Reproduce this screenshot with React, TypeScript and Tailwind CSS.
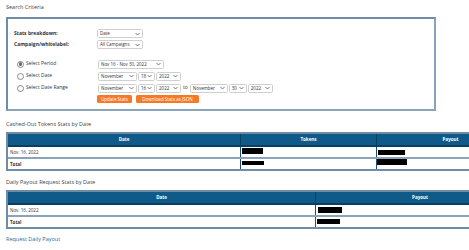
import React from "react";

function Chevron() {
  return (
    <svg width="5" height="4" viewBox="0 0 10 8" className="shrink-0" aria-hidden>
      <path d="M1 2 L5 6 L9 2" fill="none" stroke="#555" strokeWidth="1.6" />
    </svg>
  );
}

function Select({ value, w }: { value: string; w: number }) {
  return (
    <div
      className="flex h-[9px] items-center justify-between rounded-[1.5px] border border-[#cfcfcf] bg-white pl-[2px] pr-[2px] text-[4.5px] leading-none text-[#333]"
      style={{ width: w }}
    >
      <span className="whitespace-nowrap">{value}</span>
      <Chevron />
    </div>
  );
}

function Radio({ checked }: { checked?: boolean }) {
  return (
    <span className="flex h-[7px] w-[7px] items-center justify-center rounded-full border border-[#8a8a8a] bg-white">
      {checked && <span className="h-[3.5px] w-[3.5px] rounded-full bg-[#6b6b6b]" />}
    </span>
  );
}

function Redacted({ w, h }: { w: number; h: number }) {
  return <span className="block bg-black" style={{ width: w, height: h }} />;
}

export default function App() {
  return (
    <div
      className="h-[250px] w-[469px] overflow-hidden bg-white text-[#333]"
      style={{ fontFamily: '"Open Sans", "DejaVu Sans", sans-serif' }}
    >
      <div className="pl-[6px] pt-[4px]">
        <h2 className="text-[5.5px] font-medium leading-[7px] text-[#444]">Search Criteria</h2>

        <div className="mt-[6px] h-[94px] w-[430px] border-2 border-[#8aa3b8] border-t-[#6f8ca6] border-l-[#6f8ca6] pl-[6px] pt-[9px]">
          <div className="flex h-[11px] items-center">
            <span className="w-[83px] text-[5px] font-bold">Stats breakdown:</span>
            <Select value="Date" w={46} />
          </div>
          <div className="flex h-[11px] items-center">
            <span className="w-[83px] text-[5px] font-bold">Campaign/whitelabel:</span>
            <Select value="All Campaigns" w={46} />
          </div>

          <div className="mt-[8px] flex h-[12px] items-center">
            <span className="flex w-[84px] items-center gap-[2px] pl-[3px] text-[5px]">
              <Radio checked />
              Select Period
            </span>
            <Select value="Nov 16 - Nov 30, 2022" w={66} />
          </div>
          <div className="flex h-[12px] items-center">
            <span className="flex w-[84px] items-center gap-[2px] pl-[3px] text-[5px]">
              <Radio />
              Select Date
            </span>
            <div className="flex items-center gap-[1px]">
              <Select value="November" w={39} />
              <Select value="18" w={17} />
              <Select value="2022" w={25} />
            </div>
          </div>
          <div className="flex h-[12px] items-center">
            <span className="flex w-[84px] items-center gap-[2px] pl-[3px] text-[5px]">
              <Radio />
              Select Date Range
            </span>
            <div className="flex items-center gap-[1px]">
              <Select value="November" w={39} />
              <Select value="16" w={17} />
              <Select value="2022" w={25} />
              <span className="px-[1px] text-[5px]">to</span>
              <Select value="November" w={38} />
              <Select value="30" w={18} />
              <Select value="2022" w={25} />
            </div>
          </div>

          <div className="mt-[1px] flex gap-[4px] pl-[83px]">
            <button className="h-[8px] w-[35px] rounded-[1.5px] bg-[#f47a2a] text-[4.5px] leading-none text-white">
              Update Stats
            </button>
            <button className="h-[8px] w-[63px] rounded-[1.5px] bg-[#f47a2a] text-[4.5px] leading-none text-white">
              Download Stats as JSON
            </button>
          </div>
        </div>

        <h2 className="mt-[10px] text-[5.5px] font-medium leading-[7px] text-[#444]">
          Cashed-Out Tokens Stats by Date
        </h2>

        <div className="mt-[4px] w-[518px] border-2 border-r-0 border-[#6f8ca6] text-[4.5px]">
          <div className="grid h-[11px] grid-cols-[232px_136px_1fr] bg-[#0f5a88] font-bold text-white">
            <span className="flex items-center justify-center">Date</span>
            <span className="flex items-center justify-center border-l border-[#0a3f63]">Tokens</span>
            <span className="flex items-center justify-center border-l border-[#0a3f63]">Payout</span>
          </div>
          <div className="grid h-[12px] grid-cols-[232px_136px_1fr] border-t-2 border-[#0a3f63]">
            <span className="flex items-center pl-[2px]">Nov. 16, 2022</span>
            <span className="border-l border-[#1f4e79] pl-[1px] pt-[1px]">
              <Redacted w={21} h={6} />
            </span>
            <span className="border-l border-[#1f4e79] pl-[1px] pt-[3px]">
              <Redacted w={27} h={5} />
            </span>
          </div>
          <div className="grid h-[12px] grid-cols-[232px_136px_1fr] border-t-2 border-[#8aa3b8]">
            <span className="flex items-center pl-[2px] font-bold">Total</span>
            <span className="border-l border-[#1f4e79] pl-[1px] pt-[2px]">
              <Redacted w={22} h={4} />
            </span>
            <span className="border-l border-[#1f4e79]">
              <Redacted w={30} h={6} />
            </span>
          </div>
        </div>

        <h2 className="mt-[8px] text-[5.5px] font-medium leading-[7px] text-[#444]">
          Daily Payout Request Stats by Date
        </h2>

        <div className="mt-[4px] w-[518px] border-2 border-r-0 border-[#6f8ca6] text-[4.5px]">
          <div className="grid h-[11px] grid-cols-[307px_1fr] bg-[#0f5a88] font-bold text-white">
            <span className="flex items-center justify-center">Date</span>
            <span className="flex items-center justify-center border-l border-[#0a3f63]">Payout</span>
          </div>
          <div className="grid h-[12px] grid-cols-[307px_1fr] border-t-2 border-[#0a3f63]">
            <span className="flex items-center pl-[2px]">Nov. 16, 2022</span>
            <span className="border-l border-[#1f4e79] pl-[2px] pt-[2px]">
              <Redacted w={24} h={6} />
            </span>
          </div>
          <div className="grid h-[12px] grid-cols-[307px_1fr] border-t-2 border-[#8aa3b8]">
            <span className="flex items-center pl-[2px] font-bold">Total</span>
            <span className="border-l border-[#1f4e79] pl-[1px] pt-[2px]">
              <Redacted w={23} h={5} />
            </span>
          </div>
        </div>

        <a className="mt-[7px] block text-[5.5px] font-medium leading-[7px] text-[#2a6a9a]">
          Request Daily Payout
        </a>
      </div>
    </div>
  );
}
